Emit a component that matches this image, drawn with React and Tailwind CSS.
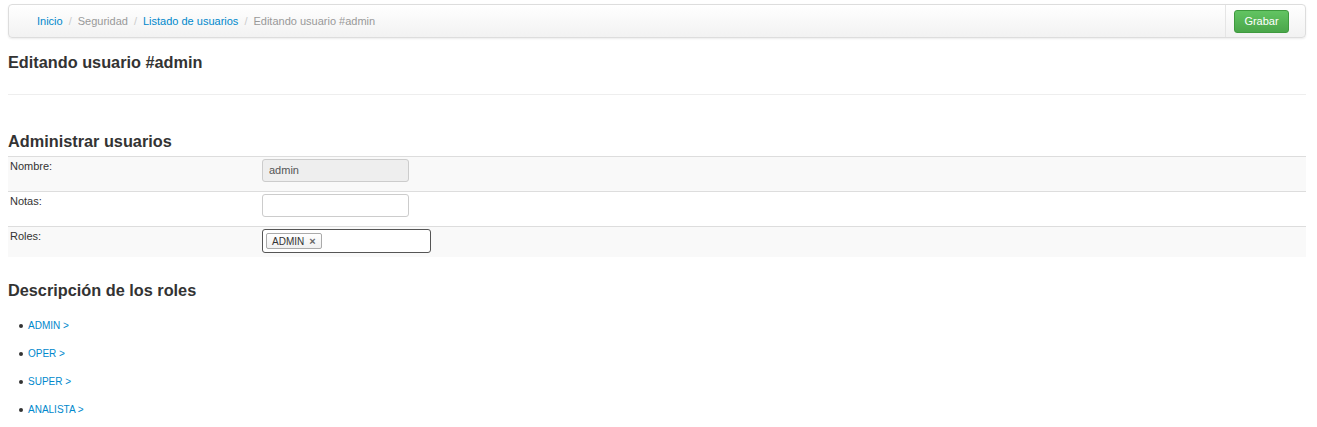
export default function App() {
  const roles = ["ADMIN", "OPER", "SUPER", "ANALISTA"];
  return (
    <div className="min-h-[427px] bg-white pl-2 pr-[11px] pt-1 text-[11px] text-[#333] [font-family:'Liberation_Sans',Arial,sans-serif]">
      <div className="flex h-[34px] items-center rounded-[4px] border border-[#ddd] bg-gradient-to-b from-white to-[#f2f2f2] shadow-[0_1px_2px_rgba(0,0,0,0.08)]">
        <div className="flex flex-1 items-center gap-[6px] pl-[28px] text-[11px]">
          <span className="text-[#0088cc]">Inicio</span>
          <span className="text-[#ccc]">/</span>
          <span className="text-[#999]">Seguridad</span>
          <span className="text-[#ccc]">/</span>
          <span className="text-[#0088cc]">Listado de usuarios</span>
          <span className="text-[#ccc]">/</span>
          <span className="text-[#999]">Editando usuario #admin</span>
        </div>
        <div className="flex h-full items-center border-l border-[#e5e5e5] pl-[8px] pr-[16px]">
          <button className="h-[23px] w-[55px] rounded-[3px] border border-[#3e9a3e] bg-gradient-to-b from-[#62c462] to-[#4aa64a] text-[11px] text-white">
            Grabar
          </button>
        </div>
      </div>

      <h1 className="mt-[14px] text-[16.3px] font-bold leading-[20px]">Editando usuario #admin</h1>
      <div className="mt-[22px] border-t border-[#eee]" />

      <h2 className="mt-[36px] text-[16.3px] font-bold leading-[20px]">Administrar usuarios</h2>
      <div className="mt-[5px]">
        <div className="flex h-[35px] border-t border-[#ddd] bg-[#f9f9f9]">
          <div className="w-[254px] pl-[2px] pt-[1px]">Nombre:</div>
          <div className="pt-[2px]">
            <div className="flex h-[23px] w-[147px] items-center rounded-[3px] border border-[#ccc] bg-[#eee] px-[6px] text-[#555]">admin</div>
          </div>
        </div>
        <div className="flex h-[35px] border-t border-[#ddd] bg-white">
          <div className="w-[254px] pl-[2px] pt-[1px]">Notas:</div>
          <div className="pt-[2px]">
            <div className="h-[23px] w-[147px] rounded-[3px] border border-[#ccc] bg-white" />
          </div>
        </div>
        <div className="flex h-[31px] border-t border-[#ddd] bg-[#f9f9f9]">
          <div className="w-[254px] pl-[2px] pt-[1px]">Roles:</div>
          <div className="pt-[2px]">
            <div className="flex h-[24px] w-[169px] items-center rounded-[3px] border border-[#555] bg-white px-[3px]">
              <span className="flex h-[16px] items-center gap-[5px] rounded-[2px] border border-[#aaa] bg-gradient-to-b from-white to-[#f0f0f0] px-[5px] text-[10px] text-[#333]">
                ADMIN <span className="text-[11px] font-bold text-[#666]">×</span>
              </span>
            </div>
          </div>
        </div>
      </div>

      <h2 className="mt-[23px] text-[16.3px] font-bold leading-[20px]">Descripción de los roles</h2>
      <ul className="mt-[19px] flex flex-col gap-[14px] pl-[11px]">
        {roles.map((r) => (
          <li key={r} className="flex items-center gap-[5px] leading-[14px]">
            <span className="inline-block h-[4px] w-[4px] rounded-full bg-[#333]" />
            <span className="text-[10px] text-[#0088cc]">{r} &gt;</span>
          </li>
        ))}
      </ul>
    </div>
  );
}
